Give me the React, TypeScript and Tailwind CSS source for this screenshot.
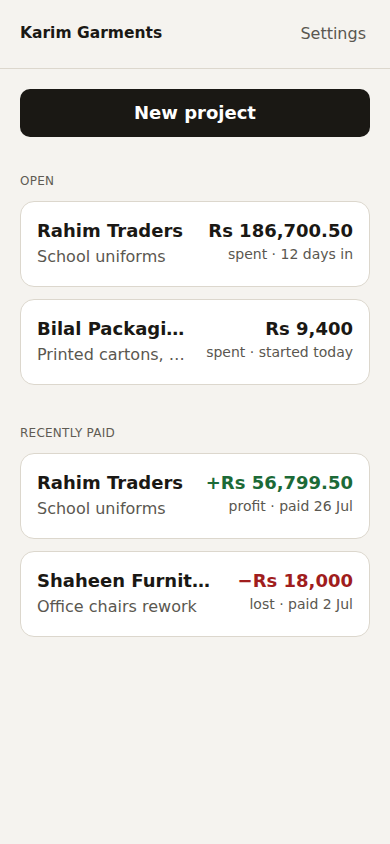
const projects = {
  open: [
    { client: "Rahim Traders", job: "School uniforms", amount: "Rs 186,700.50", meta: "spent · 12 days in", tone: "plain" },
    { client: "Bilal Packaging House", job: "Printed cartons, export batch", amount: "Rs 9,400", meta: "spent · started today", tone: "plain" },
  ],
  paid: [
    { client: "Rahim Traders", job: "School uniforms", amount: "+Rs 56,799.50", meta: "profit · paid 26 Jul", tone: "profit" },
    { client: "Shaheen Furniture", job: "Office chairs rework", amount: "\u2212Rs 18,000", meta: "lost · paid 2 Jul", tone: "loss" },
  ],
}

type Project = (typeof projects.open)[number]

function Card({ p }: { p: Project }) {
  const amountColor =
    p.tone === "profit" ? "text-[#1c6a37]" : p.tone === "loss" ? "text-[#a01d1d]" : "text-[#1a1814]"
  return (
    <div className="flex items-start gap-4 rounded-[14px] border border-[#dcd7cd] bg-white px-4 py-[17px]">
      <div className="min-w-0 flex-1">
        <p className="truncate text-[18px] font-bold leading-6 text-[#1a1814]">{p.client}</p>
        <p className="mt-[2px] truncate text-[16px] leading-6 text-[#5a5750]">{p.job}</p>
      </div>
      <div className="flex flex-col items-end">
        <p className={`whitespace-nowrap text-[18px] font-bold leading-6 ${amountColor}`}>{p.amount}</p>
        <p className="mt-[1px] whitespace-nowrap text-[14px] leading-5 text-[#5a5750]">{p.meta}</p>
      </div>
    </div>
  )
}

function Section({ title, items }: { title: string; items: Project[] }) {
  return (
    <section>
      <p className="text-[12px] uppercase leading-4 tracking-[0.02em] text-[#5f5b53]">{title}</p>
      <div className="mt-3 flex flex-col gap-3">
        {items.map((p, i) => (
          <Card key={i} p={p} />
        ))}
      </div>
    </section>
  )
}

export default function App() {
  return (
    <main className="min-h-screen bg-[#f5f3ef] font-['DejaVu_Sans',sans-serif]">
      <header className="flex h-[69px] items-center justify-between border-b border-[#dcd7cd] pl-5 pr-6">
        <p className="text-[15.5px] font-bold text-[#1a1814]">Karim Garments</p>
        <p className="text-[16px] text-[#5a5750]">Settings</p>
      </header>
      <div className="px-5 pt-5">
        <button className="h-12 w-full rounded-[10px] bg-[#1a1814] text-[18px] font-bold leading-6 text-white">
          New project
        </button>
        <div className="mt-[36px] flex flex-col gap-[40px]">
          <Section title="Open" items={projects.open} />
          <Section title="Recently paid" items={projects.paid} />
        </div>
      </div>
    </main>
  )
}
